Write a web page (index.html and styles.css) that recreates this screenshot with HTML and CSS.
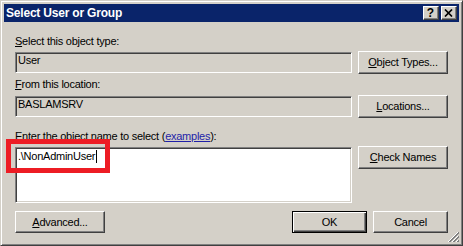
FILE: index.html
```html
<!DOCTYPE html>
<html>
<head>
<meta charset="utf-8">
<link rel="stylesheet" href="styles.css">
</head>
<body>
<div class="window">
  <div class="titlebar">
    <span class="title">Select User or Group</span>
    <div class="caption-buttons">
      <span class="cbtn help">?</span>
      <span class="cbtn close"><svg width="9" height="8" viewBox="0 0 9 8"><path d="M1 0.5 L8 7.5 M8 0.5 L1 7.5" stroke="#000" stroke-width="1.7" fill="none"/></svg></span>
    </div>
  </div>
  <div class="content">
    <div class="label first"><u>S</u>elect this object type:</div>
    <div class="row">
      <div class="field disabled">User</div>
      <div class="btn"><span><u>O</u>bject Types...</span></div>
    </div>
    <div class="label second"><u>F</u>rom this location:</div>
    <div class="row">
      <div class="field disabled">BASLAMSRV</div>
      <div class="btn"><span><u>L</u>ocations...</span></div>
    </div>
    <div class="label third"><u>E</u>nter the object name to select (<span class="link">examples</span>):</div>
    <div class="row">
      <div class="field textarea">.\NonAdminUser<span class="caret"></span></div>
      <div class="btn"><span><u>C</u>heck Names</span></div>
    </div>
    <div class="row bottom">
      <div class="btn"><span><u>A</u>dvanced...</span></div>
      <div class="spacer"></div>
      <div class="btn small default"><span>OK</span></div>
      <div class="btn small"><span>Cancel</span></div>
    </div>
  </div>
  <div class="highlight"></div>
  <svg class="grip" width="12" height="12" viewBox="0 0 12 12">
    <path d="M11 1 L1 11 M11 5 L5 11 M11 9 L9 11" stroke="#808080" stroke-width="1" fill="none"/>
    <path d="M11 2 L2 11 M11 6 L6 11 M11 10 L10 11" stroke="#808080" stroke-width="1" fill="none"/>
    <path d="M10 1 L0 11 M10 5 L4 11 M10 9 L8 11" stroke="#ffffff" stroke-width="1" fill="none"/>
  </svg>
</div>
</body>
</html>
```

FILE: styles.css
```css
html, body {
  margin: 0;
  padding: 0;
  background: #d4d0c8;
}

.window {
  position: relative;
  box-sizing: border-box;
  width: 463px;
  height: 246px;
  background: #d4d0c8;
  border: 1px solid;
  border-color: #d4d0c8 #404040 #404040 #d4d0c8;
  box-shadow: inset 1px 1px #ffffff, inset -1px -1px #808080;
  padding: 3px;
  font-family: "Liberation Sans", Arial, sans-serif;
  font-size: 11px;
  letter-spacing: -0.25px;
  color: #000;
}

.titlebar {
  height: 18px;
  background: #0a246a;
  display: flex;
  align-items: center;
  padding: 0 2px 0 2px;
}

.title {
  color: #fff;
  font-weight: bold;
  font-size: 12px;
  letter-spacing: -0.2px;
  line-height: 18px;
}

.caption-buttons {
  margin-left: auto;
  display: flex;
  gap: 2px;
}

.cbtn {
  box-sizing: border-box;
  width: 16px;
  height: 14px;
  background: #d4d0c8;
  border: 1px solid;
  border-color: #ffffff #404040 #404040 #ffffff;
  box-shadow: inset -1px -1px #808080;
  display: flex;
  align-items: center;
  justify-content: center;
}

.help {
  font-weight: bold;
  font-size: 12px;
  line-height: 12px;
  letter-spacing: 0;
  padding-right: 1px;
}

.close svg {
  display: block;
  margin-right: 1px;
}

.content {
  padding: 0 11px;
  display: flex;
  flex-direction: column;
}

.label {
  line-height: 13px;
  height: 13px;
  white-space: nowrap;
}

.label.first { margin-top: 13px; }
.label.second { margin-top: 4px; }
.label.third { margin-top: 12px; }

.label + .row { margin-top: 3px; }
.label.second + .row { margin-top: 4px; }

.row {
  display: flex;
  align-items: flex-start;
  gap: 6px;
}

.row.bottom {
  margin-top: 8px;
}

.spacer {
  flex: 1;
}

.field {
  box-sizing: border-box;
  width: 337px;
  height: 21px;
  margin-top: 1px;
  border: 1px solid;
  border-color: #808080 #ffffff #ffffff #808080;
  box-shadow: inset 1px 1px #404040, inset -1px -1px #d4d0c8;
  padding: 1px 2px 0 2px;
  line-height: 13px;
  white-space: nowrap;
}

.field.disabled {
  background: #d4d0c8;
}

.field.textarea {
  background: #ffffff;
  height: 56px;
  padding-top: 2px;
}

.caret {
  display: inline-block;
  width: 1px;
  height: 13px;
  background: #000;
  margin-left: 1px;
  vertical-align: top;
}

.link {
  color: #1f1fa8;
  text-decoration: underline;
}

.btn {
  box-sizing: border-box;
  width: 90px;
  height: 23px;
  background: #d4d0c8;
  border: 1px solid;
  border-color: #ffffff #404040 #404040 #ffffff;
  box-shadow: inset -1px -1px #808080;
  display: flex;
  align-items: center;
  justify-content: center;
  line-height: 13px;
  white-space: nowrap;
}

.row.bottom .btn {
  height: 22px;
}

.btn.small {
  width: 75px;
}

.btn.default {
  border: 1px solid #000;
  box-shadow: inset 1px 1px #ffffff, inset -1px -1px #404040, inset -2px -2px #808080;
}

.highlight {
  position: absolute;
  left: 5px;
  top: 138px;
  width: 104px;
  height: 34px;
  box-sizing: border-box;
  border: 5px solid #ed1c24;
}

.grip {
  position: absolute;
  right: 2px;
  bottom: 2px;
}
```
